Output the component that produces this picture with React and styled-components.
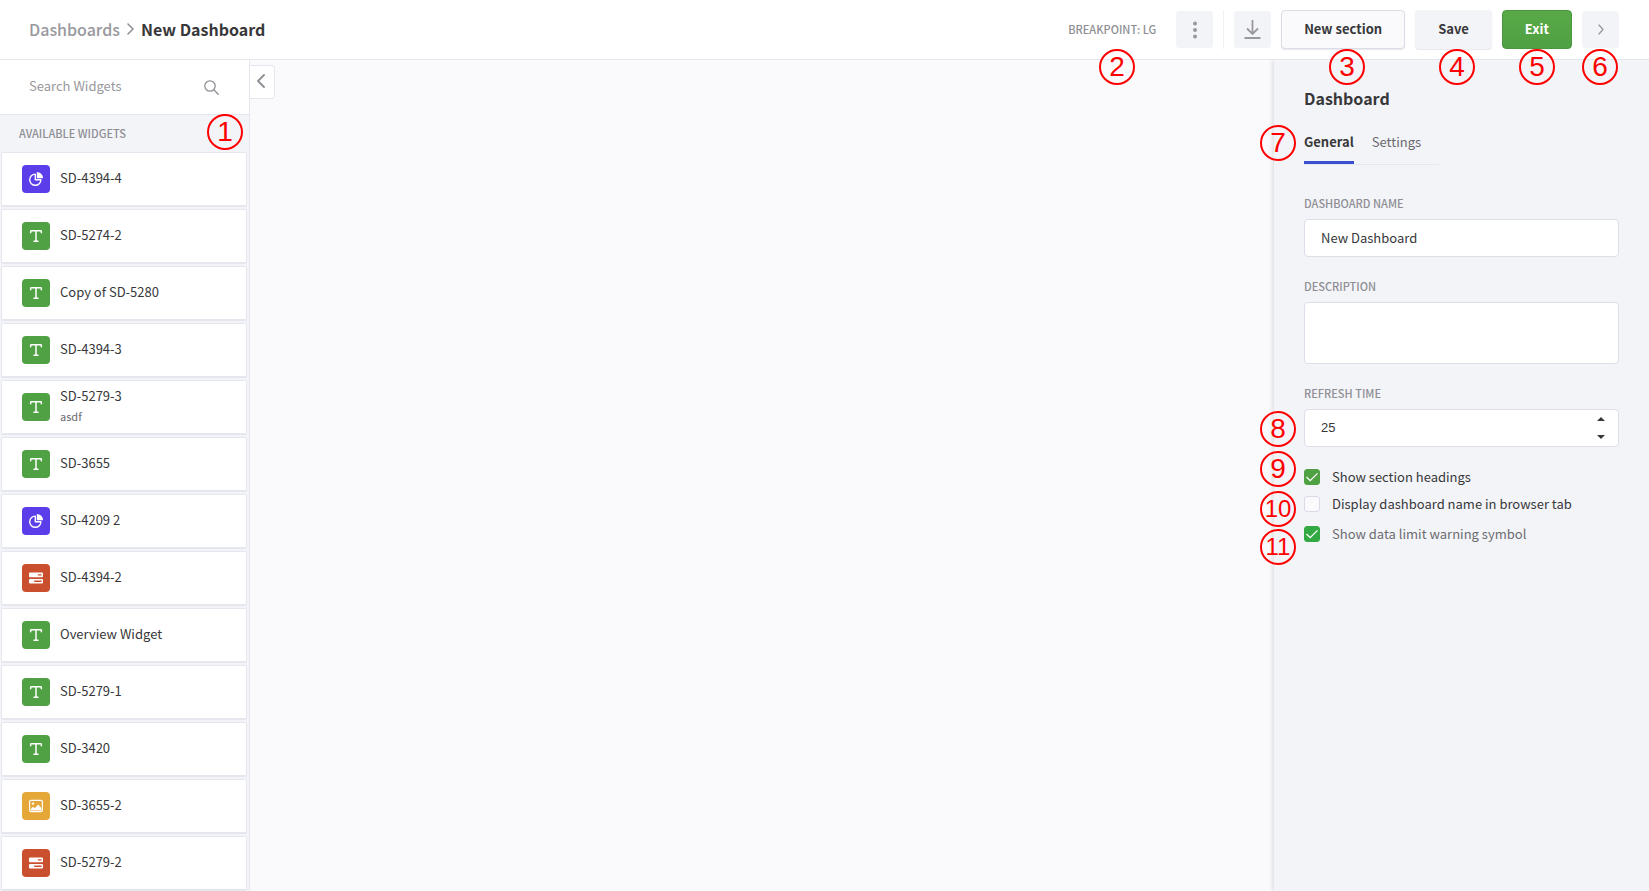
import React, { useState } from 'react';
import styled, { createGlobalStyle, css } from 'styled-components';
import { Type } from 'lucide-react';

const GlobalStyle = createGlobalStyle`
	*, *::before, *::after {
		box-sizing: border-box;
	}

	body {
		margin: 0;
		background: #fafafc;
		color: #38383a;
		font-family: 'Noto Sans CJK SC', 'Noto Sans', sans-serif;
		font-size: 13px;
		line-height: 20px;
	}

	button, input, textarea {
		font: inherit;
		color: inherit;
	}
`;

const Page = styled.div`
	position: relative;
	display: flex;
	flex-direction: column;
	min-height: 100vh;
`;

const Header = styled.header`
	display: flex;
	align-items: center;
	justify-content: space-between;
	height: 60px;
	padding: 0 30px 0 29px;
	background: #fff;
	border-bottom: 1px solid #e6e7ee;
`;

const Breadcrumbs = styled.nav`
	display: flex;
	align-items: center;
	gap: 7px;
	padding-bottom: 2px;
	color: #8e8e94;
	font-size: 16px;
	font-weight: 500;
	line-height: 24px;

	a {
		color: #98989d;
		text-decoration: none;
	}
`;

const PageTitle = styled.h1`
	margin: 0;
	color: #38383a;
	font-size: 16px;
	font-weight: 700;
	line-height: 24px;
`;

const Actions = styled.div`
	display: flex;
	align-items: center;
	gap: 10px;
`;

const Breakpoint = styled.span`
	margin-right: 10px;
	padding-bottom: 2px;
	color: #8e8e94;
	font-size: 11px;
	font-weight: 500;
`;

const IconButton = styled.button`
	display: flex;
	align-items: center;
	justify-content: center;
	width: 37px;
	height: 37px;
	padding: 0;
	color: #98989d;
	background: #f3f4f8;
	border: 0;
	border-radius: 3px;
`;

const Divider = styled.span`
	width: 1px;
	height: 39px;
	background: #f0f1f5;
`;

const Button = styled.button`
	height: 39px;
	padding: 0 22px 1px;
	font-weight: 700;
	border: 1px solid #f3f4f8;
	border-radius: 4px;
	background: #f3f4f8;
	box-shadow: 0 1px 1px rgba(60, 60, 110, 0.12);

	${props =>
		props.$variant === 'outline' &&
		css`
			background: #fafafc;
			border-color: #dcdce9;
		`}

	${props =>
		props.$variant === 'primary' &&
		css`
			color: #fff;
			background: linear-gradient(#58a946, #50a044);
			border-color: #4a963e;
			box-shadow: none;
		`}
`;

const Body = styled.div`
	display: flex;
	flex: 1;
`;

const Sidebar = styled.aside`
	flex: none;
	width: 250px;
	background: #f3f4f8;
	border-right: 1px solid #e6e7ee;
`;

const Search = styled.label`
	display: flex;
	align-items: center;
	height: 55px;
	padding: 0 30px 0 29px;
	color: #8e8e94;
	background: #fff;
	border-bottom: 1px solid #e6e7ee;

	input {
		flex: 1;
		min-width: 0;
		padding: 0 0 2px;
		border: 0;
		outline: 0;
		background: none;
	}

	input::placeholder {
		color: #98989d;
	}
`;

const SidebarHeading = styled.h2`
	margin: 0;
	padding: 0 19px;
	color: #8e8e94;
	font-size: 11px;
	font-weight: 500;
	line-height: 37px;
`;

const WidgetList = styled.ul`
	display: flex;
	flex-direction: column;
	gap: 2px;
	margin: 0;
	padding: 0 2px 0 1px;
	list-style: none;
`;

const WidgetCard = styled.li`
	display: flex;
	align-items: center;
	gap: 10px;
	height: 55px;
	padding: 0 20px;
	background: #fff;
	border: 1px solid #e6e7ee;
	border-bottom-width: 2px;
	border-radius: 2px;
`;

const WidgetIcon = styled.span`
	display: flex;
	align-items: center;
	justify-content: center;
	flex: none;
	width: 28px;
	height: 28px;
	color: #fff;
	background: ${props => props.$color};
	border-radius: 4px;
`;

const WidgetText = styled.div`
	padding-bottom: 2px;
`;

const WidgetNote = styled.div`
	color: #69696e;
	font-size: 11px;
`;

const Canvas = styled.main`
	flex: 1;
	padding-top: 5px;
`;

const CollapseButton = styled.button`
	display: flex;
	align-items: center;
	justify-content: center;
	width: 25px;
	height: 34px;
	padding: 0 2px 2px 0;
	color: #8e8e94;
	background: #fff;
	border: 1px solid #e6e7ee;
	border-left: 0;
	border-radius: 0 4px 4px 0;
`;

const Panel = styled.aside`
	flex: none;
	width: 375px;
	padding: 26px 30px;
	background: #f3f4f8;
	box-shadow: -2px 0 4px rgba(0, 0, 0, 0.1);
	clip-path: inset(0 0 0 -10px);
`;

const PanelTitle = styled.h2`
	margin: 0;
	font-size: 16px;
	font-weight: 700;
	line-height: 24px;
`;

const Tabs = styled.div`
	display: inline-flex;
	gap: 18px;
	margin-top: 22px;
	padding-right: 18px;
	border-bottom: 1px solid #e6e7ee;
`;

const Tab = styled.button`
	padding: 0 0 9px;
	color: ${props => (props.$active ? '#38383a' : '#69696e')};
	font-weight: ${props => (props.$active ? 700 : 400)};
	background: none;
	border: 0;
	border-bottom: 3px solid ${props => (props.$active ? '#3a4fd0' : 'transparent')};
`;

const Form = styled.form`
	display: flex;
	flex-direction: column;
	gap: 20px;
	margin-top: 29px;
`;

const Field = styled.div`
	display: flex;
	flex-direction: column;
	gap: 7px;

	label {
		color: #8e8e94;
		font-size: 11px;
		font-weight: 500;
		line-height: 18px;
	}
`;

const controlStyle = css`
	width: 100%;
	background: #fff;
	border: 1px solid #dcdfe8;
	border-radius: 4px;
`;

const TextInput = styled.input`
	${controlStyle}
	height: 38px;
	padding: 0 16px 1px;
`;

const TextArea = styled.textarea`
	${controlStyle}
	display: block;
	height: 62px;
	padding: 8px 16px;
	resize: none;
`;

const NumberBox = styled.div`
	${controlStyle}
	display: flex;
	height: 38px;
	padding: 0 10px 0 16px;

	input {
		flex: 1;
		min-width: 0;
		padding: 0;
		font-family: 'Liberation Sans', Arial, sans-serif;
		border: 0;
		outline: 0;
		appearance: textfield;
		background: none;
	}

	input::-webkit-inner-spin-button {
		display: none;
	}
`;

const Stepper = styled.div`
	display: flex;
	flex-direction: column;

	button {
		display: flex;
		flex: 1;
		align-items: center;
		padding: 0 3px;
		background: none;
		border: 0;
	}
`;

const Checks = styled.div`
	display: flex;
	flex-direction: column;
	gap: 7px;
`;

const CheckLabel = styled.label`
	display: flex;
	align-items: center;
	gap: 12px;
	padding: ${props => (props.$faded ? '3px 0' : 0)};
	color: ${props => (props.$faded ? '#6c6c70' : '#38383a')};
`;

const CheckBox = styled.span`
	display: grid;

	input,
	svg {
		grid-area: 1 / 1;
		width: 16px;
		height: 16px;
		margin: 0;
	}

	input {
		appearance: none;
		background: #fafafc;
		border: 1px solid #d9dbe6;
		border-radius: 3px;
	}

	input:checked {
		background: ${props => props.$color};
		border-color: ${props => props.$color};
	}

	svg {
		z-index: 1;
		color: #fff;
		pointer-events: none;
	}
`;

const Marker = styled.span`
	position: absolute;
	top: ${props => props.$top}px;
	left: ${props => (props.$left ? `${props.$left}px` : 'auto')};
	right: ${props => (props.$right ? `${props.$right}px` : 'auto')};
	z-index: 2;
	display: flex;
	align-items: center;
	justify-content: center;
	width: 36px;
	height: 36px;
	color: #f00;
	font-family: 'Liberation Sans', Arial, sans-serif;
	font-size: ${props => (props.$small ? 24 : 28)}px;
	border: 2px solid #f00;
	border-radius: 50%;
	pointer-events: none;
`;

const PieIcon = () => (
	<svg width='14' height='14' viewBox='0 0 14 14' fill='none'>
		<path
			d='M6.3 2.1A5.6 5.6 0 1 0 11.9 7.7H6.3Z'
			stroke='currentColor'
			strokeWidth='1.4'
			strokeLinejoin='round'
		/>
		<path d='M7.8 0A6.2 6.2 0 0 1 14 6.2H7.8Z' fill='currentColor' />
	</svg>
);

const BarsIcon = () => (
	<svg width='14' height='14' viewBox='0 0 14 14' fill='currentColor' fillRule='evenodd'>
		<path d='M1 1.6h12a1 1 0 0 1 1 1v2.6a1 1 0 0 1-1 1H1a1 1 0 0 1-1-1V2.6a1 1 0 0 1 1-1ZM8.8 3.2v1.4h3.8V3.2Z' />
		<path d='M1 8h12a1 1 0 0 1 1 1v2.6a1 1 0 0 1-1 1H1a1 1 0 0 1-1-1V9a1 1 0 0 1 1-1ZM5.2 9.6v1.4h7.4V9.6Z' />
	</svg>
);

const ImageIcon = () => (
	<svg width='14' height='14' viewBox='0 0 14 14' fill='none'>
		<rect x='.6' y='1.3' width='12.8' height='11.4' rx='1.4' stroke='currentColor' strokeWidth='1.2' />
		<circle cx='4' cy='4.6' r='1.2' fill='currentColor' />
		<path d='M1.8 11.6V10L4.2 7.8 5.8 9.3 9.2 5.6 12.3 9v2.6Z' fill='currentColor' />
	</svg>
);

const TextIcon = () => <Type size={16} strokeWidth={2.25} />;

const SearchIcon = () => (
	<svg width='15' height='15' viewBox='0 0 15 15' fill='none' stroke='currentColor' strokeWidth='1.3' strokeLinecap='round'>
		<circle cx='6' cy='6' r='5.2' />
		<path d='M9.8 9.8 14.2 14.2' />
	</svg>
);

const Chevron = ({ width = 6, height = 11, strokeWidth = 1.3, left }) => (
	<svg width={width} height={height} viewBox={`0 0 ${width} ${height}`} fill='none' stroke='currentColor' strokeWidth={strokeWidth} strokeLinecap='round' strokeLinejoin='round'>
		<path
			d={
				left
					? `M${width - 1} 1 1 ${height / 2} ${width - 1} ${height - 1}`
					: `M1 1 ${width - 1} ${height / 2} 1 ${height - 1}`
			}
		/>
	</svg>
);

const DotsIcon = () => (
	<svg width='4' height='18' viewBox='0 0 4 18' fill='currentColor'>
		<circle cx='2' cy='2.5' r='2' />
		<circle cx='2' cy='9' r='2' />
		<circle cx='2' cy='15.5' r='2' />
	</svg>
);

const DownloadIcon = () => (
	<svg width='17' height='19' viewBox='0 0 17 19' fill='none' stroke='currentColor' strokeWidth='1.8'>
		<path d='M8.5 0v14M3 8.5 8.5 14 14 8.5M.5 18h16' />
	</svg>
);

const CheckIcon = () => (
	<svg viewBox='0 0 16 16' fill='none' stroke='currentColor' strokeWidth='1.3'>
		<path d='M2.5 8 6.2 11.7 13.5 4.4' />
	</svg>
);

const types = {
	chart: { color: '#5b3eea', icon: <PieIcon /> },
	text: { color: '#50a044', icon: <TextIcon /> },
	filter: { color: '#ca4f2e', icon: <BarsIcon /> },
	image: { color: '#e4a738', icon: <ImageIcon /> }
};

const widgets = [
	{ name: 'SD-4394-4', type: 'chart' },
	{ name: 'SD-5274-2', type: 'text' },
	{ name: 'Copy of SD-5280', type: 'text' },
	{ name: 'SD-4394-3', type: 'text' },
	{ name: 'SD-5279-3', type: 'text', note: 'asdf' },
	{ name: 'SD-3655', type: 'text' },
	{ name: 'SD-4209 2', type: 'chart' },
	{ name: 'SD-4394-2', type: 'filter' },
	{ name: 'Overview Widget', type: 'text' },
	{ name: 'SD-5279-1', type: 'text' },
	{ name: 'SD-3420', type: 'text' },
	{ name: 'SD-3655-2', type: 'image' },
	{ name: 'SD-5279-2', type: 'filter' }
];

const markers = [
	{ label: 1, top: 114, left: 207 },
	{ label: 2, top: 49, right: 514 },
	{ label: 3, top: 49, right: 284 },
	{ label: 4, top: 49, right: 174 },
	{ label: 5, top: 49, right: 94 },
	{ label: 6, top: 49, right: 31 },
	{ label: 7, top: 125, right: 353 },
	{ label: 8, top: 411, right: 353 },
	{ label: 9, top: 451, right: 353 },
	{ label: 10, top: 491, right: 353 },
	{ label: 11, top: 529, right: 353 }
];

const Check = ({ label, color = '#50a044', faded, defaultChecked }) => (
	<CheckLabel $faded={faded}>
		<CheckBox $color={color}>
			<input type='checkbox' defaultChecked={defaultChecked} />
			<CheckIcon />
		</CheckBox>
		{label}
	</CheckLabel>
);

const App = () => {
	const [tab, setTab] = useState('General');
	const [name, setName] = useState('New Dashboard');
	const [refresh, setRefresh] = useState(25);

	return (
		<Page>
			<GlobalStyle />
			<Header>
				<Breadcrumbs>
					<a href='#dashboards'>Dashboards</a>
					<Chevron width={7} height={12} strokeWidth={1.5} />
					<PageTitle>New Dashboard</PageTitle>
				</Breadcrumbs>
				<Actions>
					<Breakpoint>BREAKPOINT: LG</Breakpoint>
					<IconButton type='button' aria-label='More'>
						<DotsIcon />
					</IconButton>
					<Divider />
					<IconButton type='button' aria-label='Download'>
						<DownloadIcon />
					</IconButton>
					<Button type='button' $variant='outline'>
						New section
					</Button>
					<Button type='button'>Save</Button>
					<Button type='button' $variant='primary'>
						Exit
					</Button>
					<IconButton type='button' aria-label='Toggle panel'>
						<Chevron />
					</IconButton>
				</Actions>
			</Header>

			<Body>
				<Sidebar>
					<Search>
						<input type='text' placeholder='Search Widgets' aria-label='Search Widgets' />
						<SearchIcon />
					</Search>
					<SidebarHeading>AVAILABLE WIDGETS</SidebarHeading>
					<WidgetList>
						{widgets.map(widget => (
							<WidgetCard key={widget.name}>
								<WidgetIcon $color={types[widget.type].color}>
									{types[widget.type].icon}
								</WidgetIcon>
								<WidgetText>
									{widget.name}
									{widget.note && <WidgetNote>{widget.note}</WidgetNote>}
								</WidgetText>
							</WidgetCard>
						))}
					</WidgetList>
				</Sidebar>

				<Canvas>
					<CollapseButton type='button' aria-label='Collapse widgets'>
						<Chevron width={8} height={14} strokeWidth={1.8} left />
					</CollapseButton>
				</Canvas>

				<Panel>
					<PanelTitle>Dashboard</PanelTitle>
					<Tabs>
						{['General', 'Settings'].map(item => (
							<Tab
								key={item}
								type='button'
								$active={tab === item}
								onClick={() => setTab(item)}>
								{item}
							</Tab>
						))}
					</Tabs>
					<Form>
						<Field>
							<label htmlFor='name'>DASHBOARD NAME</label>
							<TextInput
								id='name'
								value={name}
								onChange={e => setName(e.target.value)}
							/>
						</Field>
						<Field>
							<label htmlFor='description'>DESCRIPTION</label>
							<TextArea id='description' />
						</Field>
						<Field>
							<label htmlFor='refresh'>REFRESH TIME</label>
							<NumberBox>
								<input
									id='refresh'
									type='number'
									value={refresh}
									onChange={e => setRefresh(Number(e.target.value))}
								/>
								<Stepper>
									<button type='button' aria-label='Increase' onClick={() => setRefresh(refresh + 1)}>
										<svg width='8' height='4' viewBox='0 0 8 4'>
											<path d='M0 4 4 0 8 4Z' fill='currentColor' />
										</svg>
									</button>
									<button type='button' aria-label='Decrease' onClick={() => setRefresh(refresh - 1)}>
										<svg width='8' height='4' viewBox='0 0 8 4'>
											<path d='M0 0h8L4 4Z' fill='currentColor' />
										</svg>
									</button>
								</Stepper>
							</NumberBox>
						</Field>
						<Checks>
							<Check label='Show section headings' defaultChecked />
							<Check label='Display dashboard name in browser tab' />
							<Check label='Show data limit warning symbol' color='#33a944' faded defaultChecked />
						</Checks>
					</Form>
				</Panel>
			</Body>

			{markers.map(marker => (
				<Marker
					key={marker.label}
					$top={marker.top}
					$left={marker.left}
					$right={marker.right}
					$small={marker.label > 9}>
					{marker.label}
				</Marker>
			))}
		</Page>
	);
};

export default App;
